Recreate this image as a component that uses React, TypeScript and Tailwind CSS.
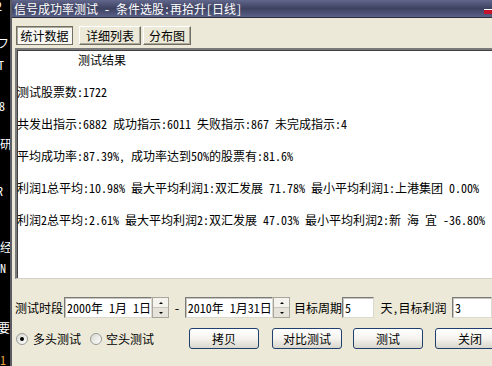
import React from "react";

const lines = [
  "测试股票数:1722",
  "共发出指示:6882 成功指示:6011 失败指示:867 未完成指示:4",
  "平均成功率:87.39%, 成功率达到50%的股票有:81.6%",
  "利润1总平均:10.98% 最大平均利润1:双汇发展 71.78% 最小平均利润1:上港集团 0.00%",
  "利润2总平均:2.61% 最大平均利润2:双汇发展 47.03% 最小平均利润2:新 海 宜 -36.80%",
];

// clipped bits of the window behind
const Strip = () => (
  <div className="flex h-[366px] w-[10px] shrink-0 flex-col overflow-hidden bg-black text-[12px] leading-[12px] text-white">
    <div className="-ml-[4px] h-[12px]">2</div>
    <div className="-ml-[3px] mt-[25px] h-[12px]">フ</div>
    <div className="-ml-[2px] mt-[10px] h-[12px]">T</div>
    <div className="-ml-[1px] mt-[29px] h-[12px]">8</div>
    <div className="mt-[26px] h-[12px] whitespace-nowrap">研</div>
    <div className="-ml-[3px] mt-[35px] h-[12px]">R</div>
    <div className="mt-[44px] h-[12px] whitespace-nowrap">经</div>
    <div className="mt-[9px] h-[12px]">N</div>
    <div className="-ml-[2px] mt-[48px] h-[13px]">要</div>
    <div className="mt-[20px] h-[12px] text-[#e8a040]">1</div>
  </div>
);

const Tab = ({ label, active, w, ml }: { label: string; active?: boolean; w: string; ml: string }) => (
  <div
    className={
      active
        ? `${w} ${ml} flex items-center justify-center border border-[#716f64] bg-[#f7f6f1] shadow-[inset_1px_1px_0_#aca899]`
        : `${w} ${ml} flex items-center justify-center border border-t-white border-l-white border-r-[#716f64] border-b-[#716f64] bg-[#ece9d8] shadow-[inset_-1px_-1px_0_#aca899]`
    }
  >
    {label}
  </div>
);

const Field = ({ text, w }: { text: string; w: string }) => (
  <div
    className={`${w} flex h-[21px] items-center whitespace-pre border border-t-[#7a7a7a] border-l-[#7a7a7a] border-r-[#dcdacf] border-b-[#dcdacf] bg-white pl-[2px] shadow-[inset_1px_1px_0_#c8c6bc]`}
  >
    {text}
  </div>
);

const Spin = () => (
  <div className="flex h-[21px] w-[17px] flex-col border border-[#a8a69a] bg-[#f4f3ee]">
    <div className="flex flex-1 items-center justify-center border-b border-[#c9c7bb]">
      <div className="h-0 w-0 border-x-[2px] border-b-[2px] border-x-transparent border-b-black" />
    </div>
    <div className="flex flex-1 items-center justify-center bg-[#e6e4da]">
      <div className="h-0 w-0 border-x-[2px] border-t-[2px] border-x-transparent border-t-black" />
    </div>
  </div>
);

const Radio = ({ on }: { on?: boolean }) => (
  <div className="flex h-[12px] w-[12px] items-center justify-center rounded-full border border-[#9a9a9a] bg-gradient-to-br from-[#d8d8d0] to-white">
    {on && <div className="h-[4px] w-[4px] rounded-full bg-black" />}
  </div>
);

const Btn = ({ label, ml }: { label: string; ml: string }) => (
  <div
    className={`${ml} flex h-[21px] w-[70px] shrink-0 items-center justify-center rounded-[3px] border border-[#1f3f6e] bg-gradient-to-b from-white via-[#f4f3ee] to-[#d9d7cc]`}
  >
    {label}
  </div>
);

export default function App() {
  return (
    <div className="flex h-[366px] w-[492px] overflow-hidden bg-black font-['Noto_Sans_Mono_CJK_SC','Noto_Sans_CJK_SC',sans-serif] text-[12px] leading-4 text-black">
      <Strip />
      <div className="flex h-[366px] min-w-0 flex-1 flex-col border-l-2 border-[#5c5c64] bg-[#ece9d8]">
        <div className="flex h-[18px] shrink-0 items-center justify-between border-b border-[#2b2d3c] bg-gradient-to-b from-[#61678c] via-[#3e4261] to-[#5a6087] pl-[2px] text-white">
          <span className="whitespace-pre">信号成功率测试 - 条件选股:再拾升[日线]</span>
          <span className="mt-[5px] h-[5px] w-[8px] border-t border-white bg-[#c4142c]" />
        </div>

        <div className="flex flex-1 flex-col pl-[3px]">
          <div className="mt-[8px] flex h-[19px]">
            <Tab label="统计数据" active w="w-[57px]" ml="ml-[1px]" />
            <Tab label="详细列表" w="w-[62px]" ml="ml-[6px]" />
            <Tab label="分布图" w="w-[48px]" ml="ml-[2px]" />
          </div>

          <div className="mt-[3px] h-[231px] border-l-2 border-t-2 border-b border-l-[#7a7a7a] border-t-[#7a7a7a] border-b-[#d4d0c8] bg-white shadow-[inset_1px_1px_0_#404040]">
            <div className="flex flex-col gap-4 whitespace-pre pt-[2px]">
              <div className="pl-[61px]">测试结果</div>
              {lines.map((l) => (
                <div key={l}>{l}</div>
              ))}
            </div>
          </div>

          <div className="mt-[18px] flex h-[21px] items-center whitespace-pre">
            <span className="w-[50px]">测试时段</span>
            <Field text="2000年 1月 1日" w="w-[90px]" />
            <Spin />
            <span className="w-[16px] text-center">-</span>
            <Field text="2010年 1月31日" w="w-[90px]" />
            <Spin />
            <span className="ml-[4px] w-[49px]">目标周期</span>
            <Field text="5" w="w-[33px]" />
            <span className="ml-[6px] w-[73px]">天,目标利润</span>
            <Field text="3" w="w-[40px] shrink-0" />
          </div>

          <div className="mt-[10px] flex h-[21px] items-center whitespace-pre">
            <div className="ml-[1px]">
              <Radio on />
            </div>
            <span className="ml-[5px]">多头测试</span>
            <div className="ml-[9px]">
              <Radio />
            </div>
            <span className="ml-[4px]">空头测试</span>
            <Btn label="拷贝" ml="ml-[35px]" />
            <Btn label="对比测试" ml="ml-[13px]" />
            <Btn label="测试" ml="ml-[11px]" />
            <Btn label="关闭" ml="ml-[12px]" />
          </div>
        </div>
      </div>
    </div>
  );
}
